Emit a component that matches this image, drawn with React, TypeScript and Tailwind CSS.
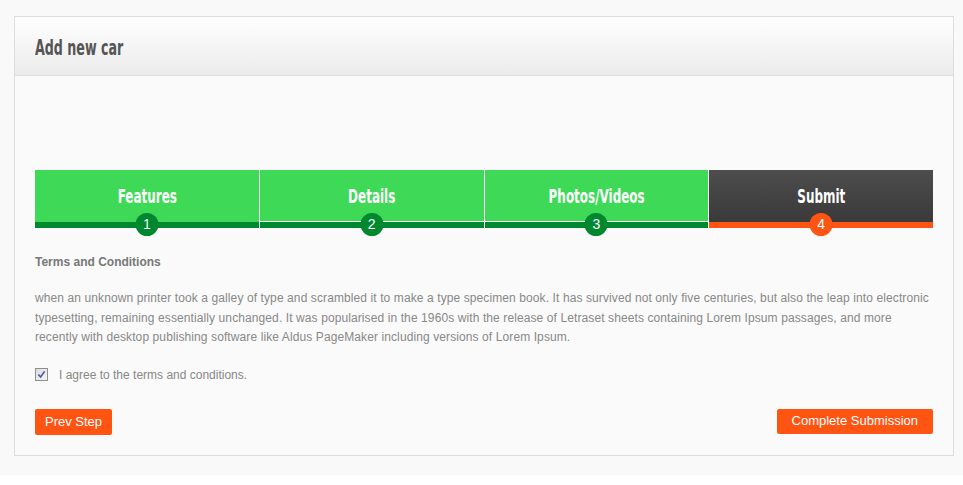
const condensed = { fontFamily: '"DejaVu Sans Condensed", "DejaVu Sans", sans-serif' }

const steps = [
  { label: 'Features', n: 1 },
  { label: 'Details', n: 2 },
  { label: 'Photos/Videos', n: 3 },
  { label: 'Submit', n: 4, active: true },
]

function Step({ label, n, active, first }: { label: string; n: number; active?: boolean; first?: boolean }) {
  return (
    <div className={`relative flex flex-1 flex-col ${first ? '' : 'border-l border-white'}`}>
      <div
        className={`flex h-[51px] items-center justify-center pt-[2px] text-white ${
          active ? 'bg-gradient-to-b from-[#4d4d4d] to-[#3a3a3a]' : 'bg-[#3dd957]'
        }`}
      >
        <span className="inline-block scale-x-[0.7] text-[19px] font-bold" style={condensed}>
          {label}
        </span>
      </div>
      <div className={`h-px ${active ? 'bg-[#3c3c3c]' : first ? 'bg-[#3dd957]' : 'bg-white'}`} />
      <div className={`h-[6px] ${active ? 'bg-[#ff5412]' : 'bg-[#00882f]'}`} />
      <div
        className={`absolute bottom-[-8px] left-1/2 flex h-[23px] w-[23px] -translate-x-1/2 items-center justify-center rounded-full text-[14px] text-white ${
          active ? 'bg-[#ff5412]' : 'bg-[#00882f]'
        }`}
      >
        {n}
      </div>
    </div>
  )
}

export default function App() {
  return (
    <div className="min-h-screen bg-white" style={{ fontFamily: '"Liberation Sans", Arial, sans-serif' }}>
      <div className="h-[475px] bg-[#f9f9f9] pl-[14px] pr-[9px] pt-[16px]">
        <div className="border border-[#dddddd] bg-[#fafafa]">
          <div className="flex h-[59px] items-center border-b border-[#dddddd] bg-gradient-to-b from-white to-[#ebebeb] px-5 pt-[3px]">
            <h2
              className="inline-block origin-left scale-x-[0.64] text-[22px] font-bold text-[#555555]"
              style={condensed}
            >
              Add new car
            </h2>
          </div>
          <div className="px-5 pb-5 pt-[94px]">
            <div className="flex">
              {steps.map((s, i) => (
                <Step key={s.n} {...s} first={i === 0} />
              ))}
            </div>
            <h4 className="mt-[27px] text-[12px] font-bold leading-[15px] text-[#777777]">Terms and Conditions</h4>
            <p className="mt-[19px] text-[12px] leading-[19.5px] tracking-[0.1px] text-[#888888]">
              when an unknown printer took a galley of type and scrambled it to make a type specimen book. It has survived not only five
              centuries, but also the leap into electronic typesetting, remaining essentially unchanged. It was popularised in the 1960s
              with the release of Letraset sheets containing Lorem Ipsum passages, and more recently with desktop publishing software like
              Aldus PageMaker including versions of Lorem Ipsum.
            </p>
            <label className="mt-[17px] flex h-5 items-center gap-[11px] text-[12px] text-[#888888]">
              <span className="flex h-[13px] w-[13px] items-center justify-center border border-[#8e8f8f] bg-gradient-to-br from-[#dcdcdc] to-[#f5f5f5]">
                <svg viewBox="0 0 10 10" className="h-[9px] w-[9px]">
                  <path d="M1.5 5 L4 7.8 L8.5 1.5" fill="none" stroke="#4a5699" strokeWidth="1.8" />
                </svg>
              </span>
              I agree to the terms and conditions.
            </label>
            <div className="mt-[24px] flex items-start justify-between">
              <button className="h-[26px] rounded-[2px] bg-[#ff5412] px-[10px] text-[13px] text-white">Prev Step</button>
              <button className="h-[25px] rounded-[2px] bg-[#ff5412] px-[15px] text-[13px] text-white">Complete Submission</button>
            </div>
          </div>
        </div>
      </div>
    </div>
  )
}
